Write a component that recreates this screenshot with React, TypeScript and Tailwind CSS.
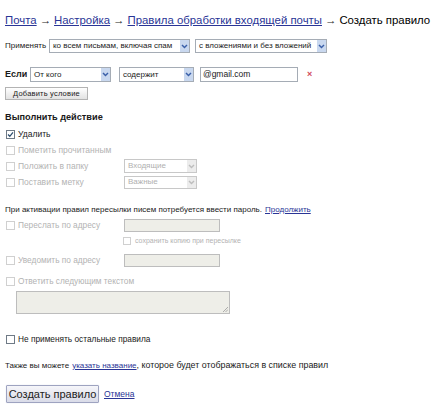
import React from "react";

const Chevron = ({ color }: { color: string }) => (
  <svg width="7" height="5" viewBox="0 0 7 5">
    <path d="M1 1 L3.5 3.6 L6 1" stroke={color} strokeWidth="1.4" fill="none" />
  </svg>
);

const Select = ({
  text,
  w,
  h = 14,
  disabled = false,
}: {
  text: string;
  w: number;
  h?: number;
  disabled?: boolean;
}) => (
  <div
    className={`flex shrink-0 items-stretch border ${disabled ? "border-[#c8c8c8] bg-white text-[#b0b0b0]" : "border-[#a5acb5] bg-white text-[#222]"}`}
    style={{ width: w, height: h }}
  >
    <div className="flex flex-1 items-center overflow-hidden whitespace-nowrap pl-[3px] text-[8px]">{text}</div>
    <div
      className={`flex w-[9px] items-center justify-center ${disabled ? "bg-[#ececec]" : "bg-[#c9d8ef]"}`}
    >
      <Chevron color={disabled ? "#bdbdbd" : "#3a5fa8"} />
    </div>
  </div>
);

const Box = ({ checked = false, disabled = false, size = 9 }: { checked?: boolean; disabled?: boolean; size?: number }) => (
  <div
    className={`flex shrink-0 items-center justify-center border bg-white ${disabled ? "border-[#d0d0d0]" : "border-[#6f7a86]"}`}
    style={{ width: size, height: size }}
  >
    {checked && (
      <svg width="7" height="7" viewBox="0 0 7 7">
        <path d="M1 3.5 L2.8 5.3 L6 1.4" stroke="#2f4f6f" strokeWidth="1.3" fill="none" />
      </svg>
    )}
  </div>
);

const Arrow = () => <span className="mx-[3px]">→</span>;

export default function App() {
  return (
    <div
      className="h-[411px] w-[434px] overflow-hidden bg-white text-[#1a1a1a]"
      style={{ fontFamily: '"Liberation Sans", Arial, sans-serif' }}
    >
      <div className="pl-[5px]">
        {/* breadcrumb */}
        <div className="mt-[12px] flex h-[16px] items-center whitespace-nowrap text-[11.4px] leading-[16px]">
          <span className="text-[#2a3596] underline">Почта</span>
          <Arrow />
          <span className="text-[#2a3596] underline">Настройка</span>
          <Arrow />
          <span className="text-[#2a3596] underline">Правила обработки входящей почты</span>
          <Arrow />
          <span className="text-black">Создать правило</span>
        </div>

        {/* apply */}
        <div className="mt-[11px] flex h-[14px] items-center">
          <span className="w-[44px] text-[8px]">Применять</span>
          <Select text="ко всем письмам, включая спам" w={141} />
          <div className="w-[5px]" />
          <Select text="с вложениями и без вложений" w={132} />
        </div>

        {/* if */}
        <div className="mt-[14px] flex h-[15px] items-center">
          <span className="w-[25px] text-[9px] font-bold">Если</span>
          <Select text="От кого" w={81} h={15} />
          <div className="w-[8px]" />
          <Select text="содержит" w={75} h={15} />
          <div className="w-[6px]" />
          <div className="flex h-[15px] w-[98px] items-center border border-[#a5acb5] pl-[2px] text-[8.5px]">@gmail.com</div>
          <span className="ml-[9px] text-[9px] font-bold text-[#d04a5a]">×</span>
        </div>

        {/* add condition */}
        <div className="mt-[5px] flex h-[13px] w-[83px] items-center justify-center border border-[#b3b3b3] bg-gradient-to-b from-white to-[#e2e2e2] text-[7.5px] tracking-[0.2px]">
          Добавить условие
        </div>

        {/* actions */}
        <div className="mt-[13px] flex h-[10px] items-center text-[9.2px] font-bold">Выполнить действие</div>

        <div className="mt-[3px] flex flex-col">
          <div className="flex h-[16px] items-center">
            <div className="ml-[1px]"><Box checked /></div>
            <span className="ml-[3px] text-[8.5px]">Удалить</span>
          </div>
          <div className="flex h-[16px] items-center text-[#b3b3b3]">
            <div className="ml-[1px]"><Box disabled /></div>
            <span className="ml-[3px] text-[8.5px]">Пометить прочитанным</span>
          </div>
          <div className="flex h-[16px] items-center text-[#b3b3b3]">
            <div className="ml-[1px]"><Box disabled /></div>
            <span className="ml-[3px] w-[106px] text-[8.5px]">Положить в папку</span>
            <Select text="Входящие" w={73} disabled />
          </div>
          <div className="flex h-[16px] items-center text-[#b3b3b3]">
            <div className="ml-[1px]"><Box disabled /></div>
            <span className="ml-[3px] w-[106px] text-[8.5px]">Поставить метку</span>
            <Select text="Важные" w={73} h={13} disabled />
          </div>
        </div>

        {/* forwarding */}
        <div className="mt-[14px] flex h-[12px] items-center whitespace-nowrap text-[8px]">
          При активации правил пересылки писем потребуется ввести пароль.
          <span className="ml-[3px] text-[#2a3596] underline">Продолжить</span>
        </div>

        <div className="mt-[3px] flex h-[13px] items-center text-[#b3b3b3]">
          <div className="ml-[1px]"><Box disabled /></div>
          <span className="ml-[3px] w-[106px] text-[8.3px]">Переслать по адресу</span>
          <div className="h-[13px] w-[96px] border border-[#bdbdbd] bg-[#eeeee8]" />
        </div>
        <div className="mt-[4px] flex h-[10px] items-center text-[#b3b3b3]">
          <div className="ml-[118px]"><Box disabled size={8} /></div>
          <span className="ml-[4px] text-[7px]">сохранить копию при пересылке</span>
        </div>

        <div className="mt-[8px] flex h-[13px] items-center text-[#b3b3b3]">
          <div className="ml-[1px]"><Box disabled /></div>
          <span className="ml-[3px] w-[106px] text-[8.3px]">Уведомить по адресу</span>
          <div className="h-[13px] w-[96px] border border-[#bdbdbd] bg-[#eeeee8]" />
        </div>

        <div className="mt-[8px] flex h-[12px] items-center text-[#b3b3b3]">
          <div className="ml-[1px]"><Box disabled /></div>
          <span className="ml-[3px] text-[8.3px]">Ответить следующим текстом</span>
        </div>

        <div className="relative ml-[11px] mt-[4px] h-[23px] w-[214px] border border-[#bdbdbd] bg-[#eeeee8]">
          <svg className="absolute bottom-[1px] right-[1px]" width="5" height="5" viewBox="0 0 5 5">
            <path d="M5 0 L0 5 M5 2.5 L2.5 5" stroke="#9a9a9a" strokeWidth="0.8" />
          </svg>
        </div>

        <div className="mt-[19px] flex h-[12px] items-center">
          <div className="ml-[1px]"><Box /></div>
          <span className="ml-[3px] text-[8.3px]">Не применять остальные правила</span>
        </div>

        <div className="mt-[15px] flex h-[12px] items-center whitespace-nowrap text-[8px]">
          <span>Также вы можете</span>
          <span className="ml-[3px] text-[#2a3596] underline">указать название</span>
          <span className="text-[8.9px]">, которое будет отображаться в списке правил</span>
        </div>

        <div className="mt-[13px] flex h-[18px] items-center">
          <div className="ml-[1px] flex h-[18px] w-[93px] items-center justify-center rounded-[1px] border border-[#9ea3c0] bg-gradient-to-b from-[#f6f6fa] to-[#d9dbe8] text-[11px] text-[#222] shadow-[0_0_1px_#c4c8e0]">
            Создать правило
          </div>
          <span className="ml-[5px] text-[8.5px] text-[#2a3596] underline">Отмена</span>
        </div>
      </div>
    </div>
  );
}
